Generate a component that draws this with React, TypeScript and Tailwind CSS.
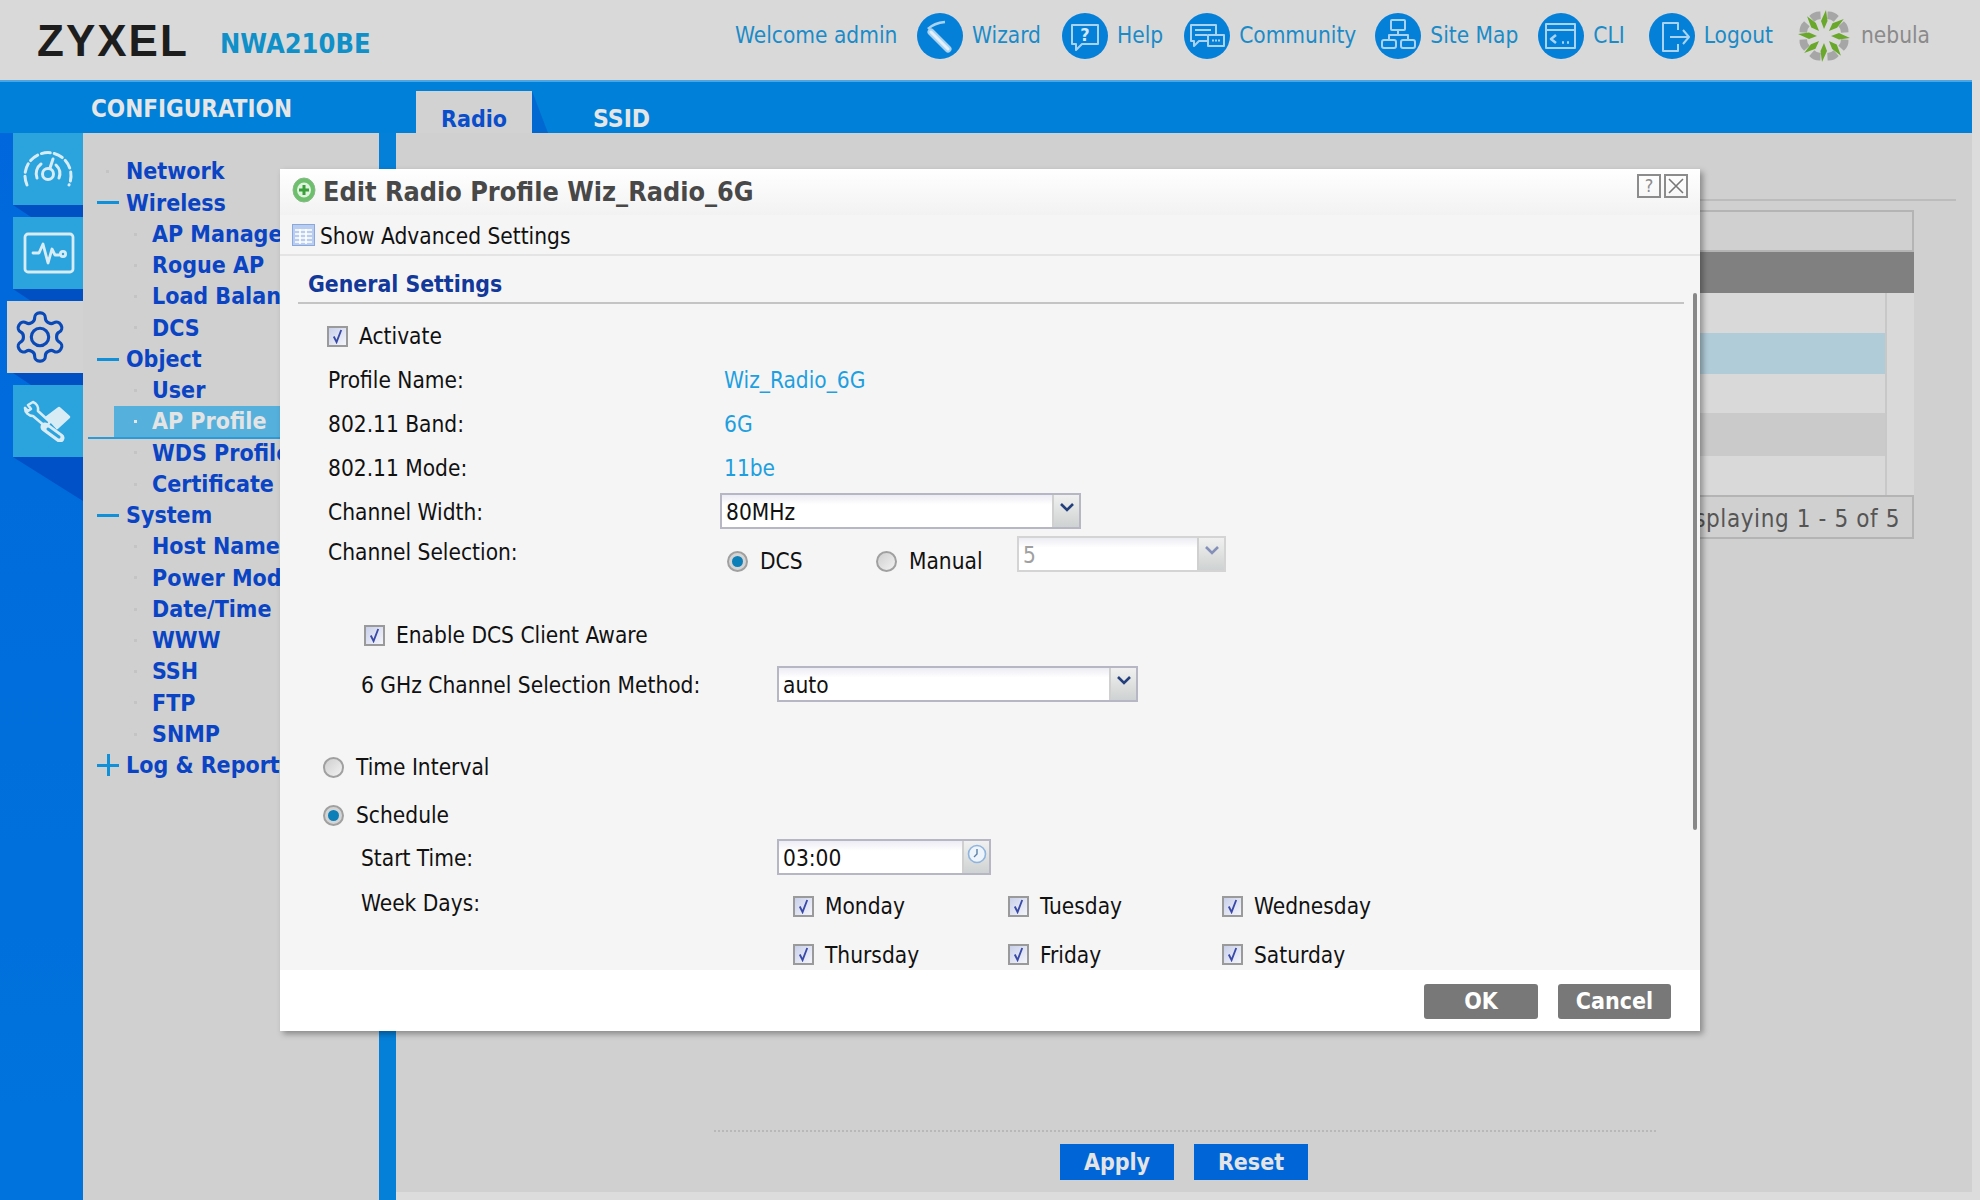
const navRows: { label: string; level: number; mark?: string; active?: boolean }[] = [
  { label: "Network", level: 0 },
  { label: "Wireless", level: 0, mark: "minus" },
  { label: "AP Manage", level: 1 },
  { label: "Rogue AP", level: 1 },
  { label: "Load Balan", level: 1 },
  { label: "DCS", level: 1 },
  { label: "Object", level: 0, mark: "minus" },
  { label: "User", level: 1 },
  { label: "AP Profile", level: 1, active: true },
  { label: "WDS Profile", level: 1 },
  { label: "Certificate", level: 1 },
  { label: "System", level: 0, mark: "minus" },
  { label: "Host Name", level: 1 },
  { label: "Power Mod", level: 1 },
  { label: "Date/Time", level: 1 },
  { label: "WWW", level: 1 },
  { label: "SSH", level: 1 },
  { label: "FTP", level: 1 },
  { label: "SNMP", level: 1 },
  { label: "Log & Report", level: 0, mark: "plus" },
]

function CircleIcon({ children }: { children: React.ReactNode }) {
  return (
    <div className="flex h-[46px] w-[46px] shrink-0 items-center justify-center rounded-full bg-[#0580d8]">
      <svg viewBox="0 0 46 46" className="h-[46px] w-[46px]" fill="none" stroke="#a9d3f0" strokeWidth="2" strokeLinejoin="round">
        {children}
      </svg>
    </div>
  )
}

function TopLink({ label, ml, children }: { label: string; ml: string; children: React.ReactNode }) {
  return (
    <div className={`flex items-center gap-[9px] ${ml}`}>
      <CircleIcon>{children}</CircleIcon>
      <span>{label}</span>
    </div>
  )
}

function NebulaLogo() {
  const angles = [0, 45, 90, 135, 180, 225, 270, 315]
  return (
    <svg viewBox="0 0 54 54" className="h-[54px] w-[54px]">
      {angles.map((a) => (
        <path key={a} d="M21 3 Q27 0 33 3 L30.5 10 Q27 8.5 23.5 10 Z" fill="#a6a6a6" transform={`rotate(${a + 22.5} 27 27)`} />
      ))}
      {angles.map((a) => (
        <path key={a} d="M27 20 L24 12 L29 1 L30.5 12 Z" fill="#6aa82c" transform={`rotate(${a} 27 27)`} />
      ))}
    </svg>
  )
}

function SideTab({ active, children }: { active?: boolean; children: React.ReactNode }) {
  return (
    <div className={`flex h-[72px] items-center ${active ? "ml-[7px] w-[76px] bg-[#d2d2d2]" : "ml-[13px] w-[70px] bg-[#2ba3dc]"}`}>
      {children}
    </div>
  )
}

function Fold() {
  return (
    <svg viewBox="0 0 70 12" preserveAspectRatio="none" className="ml-[13px] block h-[12px] w-[70px]">
      <path d="M0 0H70V12H18Z" fill="#0050c4" />
    </svg>
  )
}

function Check({ label, className = "" }: { label: string; className?: string }) {
  return (
    <div className={`flex items-center gap-[11px] ${className}`}>
      <div className="flex h-[21px] w-[21px] shrink-0 items-center justify-center border-2 border-[#9a9a9a] bg-[linear-gradient(135deg,#c9d0ea,#f4f5fb)]">
        <svg viewBox="0 0 14 16" className="h-[15px] w-[13px]" fill="none" stroke="#3949a8" strokeWidth="2">
          <path d="M3 8 L6 14 L11 1" />
        </svg>
      </div>
      <span>{label}</span>
    </div>
  )
}

function Radio({ on, label, className = "" }: { on?: boolean; label: string; className?: string }) {
  return (
    <div className={`flex items-center gap-[12px] ${className}`}>
      <div className={`flex h-[21px] w-[21px] shrink-0 items-center justify-center rounded-full border-2 border-[#a0a0a0] ${on ? "bg-[#d4d4d4]" : "bg-[linear-gradient(135deg,#cfcfcf,#f2f2f2)]"}`}>
        {on && <div className="h-[11px] w-[11px] rounded-full bg-[#0d7fb8]" />}
      </div>
      <span>{label}</span>
    </div>
  )
}

function Select({ value, width, disabled, className = "" }: { value: string; width: string; disabled?: boolean; className?: string }) {
  return (
    <div className={`flex h-[36px] items-stretch border-2 bg-[linear-gradient(#ececf4,#ffffff_30%)] ${width} ${disabled ? "border-[#d4d4d4] text-[#a0a0a0]" : "border-[#b6b6c4]"} ${className}`}>
      <div className="flex flex-1 items-center pl-[4px] pt-[3px]">{value}</div>
      <div className="flex w-[27px] justify-center border-l-2 border-[#d0d0d0] bg-[linear-gradient(#f0f0f0,#cfd2d2)] pt-[8px]">
        <svg viewBox="0 0 14 9" className="h-[9px] w-[14px]">
          <path d="M1 1 L7 7 L13 1" fill="none" stroke={disabled ? "#8590b8" : "#24407c"} strokeWidth="2.6" />
        </svg>
      </div>
    </div>
  )
}

function Row({ label, value }: { label: string; value: string }) {
  return (
    <div className="flex h-[44px] items-center pl-[48px] pt-[2px]">
      <span className="w-[396px]">{label}</span>
      <span className="text-[#1e9fe0]">{value}</span>
    </div>
  )
}

export default function App() {
  return (
    <div className="relative h-[1200px] w-[1980px] overflow-hidden bg-[#dcdcdc] font-['DejaVu_Sans_Condensed','DejaVu_Sans',sans-serif]">
      {/* header */}
      <header className="flex h-[80px] items-center bg-[#d9d9d9] pl-[37px]">
        <div className="w-[183px] pt-[1px] font-['Liberation_Sans'] text-[44px] font-bold tracking-[2px] text-[#1d1d1d]">ZYXEL</div>
        <div className="mt-[9px] w-[515px] text-[27px] font-bold text-[#1090c8]">NWA210BE</div>
        <div className="flex items-center pb-[8px] text-[22.5px] text-[#1b8bc8]">
          <span className="w-[182px]">Welcome admin</span>
          <TopLink label="Wizard" ml="">
            <path d="M14 19 L31 36" stroke="#a9d3f0" strokeWidth="7" strokeLinecap="round" />
            <path d="M14 19 L31 36" stroke="#e4f1fa" strokeWidth="3" strokeLinecap="round" />
            <path d="M11 16 Q17 10 28 9" strokeWidth="2.6" />
          </TopLink>
          <TopLink label="Help" ml="ml-[21px]">
            <path d="M10 12 H36 V31 H20 L14 37 V31 H10 Z" />
            <text x="23" y="28" textAnchor="middle" fontSize="18" fontWeight="bold" fill="#d6e9f7" stroke="none">?</text>
          </TopLink>
          <TopLink label="Community" ml="ml-[21px]">
            <path d="M7 12 H32 V28 H15 L10 33 V28 H7 Z" />
            <path d="M11 17 H27 M11 22 H23" />
            <path d="M24 22 H40 V33 H24 Z" fill="#0580d8" />
            <path d="M28 27.5 H36" strokeDasharray="2 1" />
          </TopLink>
          <TopLink label="Site Map" ml="ml-[19px]">
            <rect x="16" y="7" width="14" height="10" rx="1" />
            <rect x="7" y="27" width="14" height="8" rx="2" />
            <rect x="26" y="27" width="14" height="8" rx="2" />
            <path d="M23 17 V22 M14 27 V22 H33 V27" />
          </TopLink>
          <TopLink label="CLI" ml="ml-[20px]">
            <rect x="8" y="11" width="29" height="24" />
            <path d="M8 17 H37" />
            <path d="M18 22 L13 26 L18 30" strokeWidth="2.6" fill="none" />
            <path d="M24 29.5 H26 M29 29.5 H31" strokeWidth="2.6" />
          </TopLink>
          <TopLink label="Logout" ml="ml-[24px]">
            <path d="M29 17 V10 H14 V38 H29 V31" />
            <path d="M21 24 H40 M34 17 L40 24 L34 31" />
          </TopLink>
          <div className="ml-[24px]"><NebulaLogo /></div>
          <span className="ml-[10px] text-[#8a8a8a]">nebula</span>
        </div>
      </header>

      {/* blue bar */}
      <div className="mr-[8px] flex h-[53px] border-t-2 border-[#4aa6e4] bg-[#0080d8] text-[23px] font-bold text-[#e6e6e6]">
        <div className="w-[416px] pl-[91px] pt-[9px] text-[24px]">CONFIGURATION</div>
        <div className="mt-[9px] flex w-[116px] justify-center bg-[#d2d2d2] pt-[11px] text-[#0a4ecb]">Radio</div>
        <svg viewBox="0 0 16 42" preserveAspectRatio="none" className="mt-[9px] h-[42px] w-[16px]"><path d="M0 0 L16 42 H0Z" fill="#0068d0" /></svg>
        <div className="ml-[45px] pt-[19px] text-[24.5px]">SSID</div>
      </div>

      {/* body */}
      <div className="flex h-[1067px]">
        <aside className="w-[83px] bg-[linear-gradient(#0068dc,#0074dc)]">
          <SideTab>
            <svg viewBox="0 0 50 40" className="ml-[10px] h-[40px] w-[50px]" fill="none" stroke="#d8ecf6" strokeWidth="3" strokeLinecap="round">
              <path d="M4 36 A23 23 0 1 1 46 36" strokeDasharray="9 4" />
              <circle cx="25" cy="25" r="5.5" />
              <path d="M14 29 A12 12 0 0 1 18 15 M36 29 A12 12 0 0 0 33 16" />
              <path d="M27 19 L30 10" />
            </svg>
          </SideTab>
          <Fold />
          <SideTab>
            <svg viewBox="0 0 52 42" className="ml-[10px] h-[42px] w-[52px]" fill="none" stroke="#d8ecf6" strokeWidth="2.8" strokeLinecap="round" strokeLinejoin="round">
              <rect x="2" y="2" width="48" height="38" rx="3" />
              <path d="M10 21 H16 L20 12 L25 31 L29 17 L32 23 H36" />
              <circle cx="40" cy="22" r="2.6" />
            </svg>
          </SideTab>
          <Fold />
          <SideTab active>
            <svg viewBox="0 0 24 24" className="ml-[4px] h-[58px] w-[58px]" fill="none" stroke="#0a4ab8" strokeWidth="1.3" strokeLinejoin="round">
              <path d="M12.22 2h-.44a2 2 0 0 0-2 2v.18a2 2 0 0 1-1 1.73l-.43.25a2 2 0 0 1-2 0l-.15-.08a2 2 0 0 0-2.73.73l-.22.38a2 2 0 0 0 .73 2.73l.15.1a2 2 0 0 1 1 1.72v.51a2 2 0 0 1-1 1.74l-.15.09a2 2 0 0 0-.73 2.73l.22.38a2 2 0 0 0 2.73.73l.15-.08a2 2 0 0 1 2 0l.43.25a2 2 0 0 1 1 1.73V20a2 2 0 0 0 2 2h.44a2 2 0 0 0 2-2v-.18a2 2 0 0 1 1-1.73l.43-.25a2 2 0 0 1 2 0l.15.08a2 2 0 0 0 2.73-.73l.22-.39a2 2 0 0 0-.73-2.73l-.15-.08a2 2 0 0 1-1-1.74v-.5a2 2 0 0 1 1-1.74l.15-.09a2 2 0 0 0 .73-2.73l-.22-.38a2 2 0 0 0-2.73-.73l-.15.08a2 2 0 0 1-2 0l-.43-.25a2 2 0 0 1-1-1.73V4a2 2 0 0 0-2-2z" />
              <circle cx="12" cy="12" r="3.6" />
            </svg>
          </SideTab>
          <Fold />
          <SideTab>
            <svg viewBox="0 0 48 42" className="ml-[10px] h-[42px] w-[48px]" fill="none" stroke="#d8ecf6" strokeWidth="2.6" strokeLinecap="round" strokeLinejoin="round">
              <path d="M10 2 L5 5 L8 9 L5 11 L2 8 A8 8 0 0 0 10 16 L23 27 L27 22 L15 11 A8 8 0 0 0 10 2 Z" />
              <path d="M24 17 L36 8 L46 17 L34 28 Z" fill="#d8ecf6" />
              <path d="M22 27 L37 38" stroke="#d8ecf6" strokeWidth="9" />
              <path d="M25 29 L36 37" stroke="#2ba3dc" strokeWidth="3" />
            </svg>
          </SideTab>
          <svg viewBox="0 0 70 44" preserveAspectRatio="none" className="ml-[13px] block h-[44px] w-[70px]"><path d="M0 0H70V44Z" fill="#0050c8" /></svg>
        </aside>

        <nav className="w-[296px] bg-[#d0d0d0] pt-[23px] text-[23px] font-bold text-[#0a44c4]">
          {navRows.map((r) => (
            <div key={r.label} className="flex h-[31.25px] items-center whitespace-nowrap">
              <div className={`relative flex h-full w-full items-center ${r.level ? "pl-[69px]" : "pl-[43px]"}`}>
                {r.active && (
                  <>
                    <div className="absolute bottom-0 left-[31px] right-0 top-0 bg-[#55b0dc]" />
                    <div className="absolute bottom-[-2px] left-[5px] right-0 h-[2px] bg-[#2a9ad8]" />
                  </>
                )}
                {r.mark === "minus" && <div className="absolute left-[14px] h-[3px] w-[22px] bg-[#1090d8]" />}
                {r.mark === "plus" && (
                  <>
                    <div className="absolute left-[14px] h-[3px] w-[22px] bg-[#1090d8]" />
                    <div className="absolute left-[24px] h-[22px] w-[3px] bg-[#1090d8]" />
                  </>
                )}
                {!r.mark && <div className={`absolute h-[3px] w-[3px] ${r.level ? "left-[51px]" : "left-[23px]"} ${r.active ? "bg-[#e6e6e6]" : "bg-[#c4c4c4]"}`} />}
                <span className={`relative ${r.active ? "text-[#e4e4e4]" : ""}`}>{r.label}</span>
              </div>
            </div>
          ))}
        </nav>

        <div className="w-[17px] bg-[#0580d8]" />

        {/* page behind the dialog */}
        <main className="mb-[8px] flex h-[1059px] w-[1576px] flex-col bg-[#d0d0d0]">
          <div className="ml-[40px] mr-[16px] mt-[66px] h-[1px] shrink-0 border-t-2 border-[#bcbcbc]" />
          <div className="ml-[40px] mr-[58px] mt-[9px] flex flex-col text-[#555]">
            <div className="h-[42px] border-2 border-[#b4b4b4]" />
            <div className="h-[41px] bg-[#808080]" />
            <div className="flex h-[202px] bg-[#d9d9d9]">
              <div className="flex flex-1 flex-col border-r-2 border-[#c8c8c8]">
                <div className="h-[40px]" />
                <div className="h-[41px] bg-[#b0ccd9]" />
                <div className="h-[39px]" />
                <div className="h-[43px] bg-[#cacaca]" />
              </div>
              <div className="w-[27px]" />
            </div>
            <div className="flex h-[44px] items-center justify-end border-2 border-[#b4b4b4] pr-[12px] pt-[3px] text-[24px] tracking-[0.6px]">Displaying 1 - 5 of 5</div>
          </div>
          <div className="ml-[318px] mr-[316px] mt-auto border-t-2 border-dotted border-[#b8b8b8]" />
          <div className="mb-[12px] ml-[664px] mt-[12px] flex gap-[20px] text-[23px] font-bold text-[#e4e4e4]">
            <div className="flex h-[36px] w-[114px] items-center justify-center bg-[#0066d8]">Apply</div>
            <div className="flex h-[36px] w-[114px] items-center justify-center bg-[#0066d8]">Reset</div>
          </div>
        </main>
      </div>

      {/* dialog */}
      <div className="absolute left-[280px] top-[169px] flex h-[862px] w-[1420px] flex-col bg-[#f5f5f5] text-[22.5px] leading-none text-[#111] shadow-[3px_3px_6px_rgba(0,0,0,0.35)]">
        <div className="relative flex h-[46px] shrink-0 items-center bg-[linear-gradient(#ffffff,#f2f2f2)] pb-[1px] pl-[12px]">
          <svg viewBox="0 0 24 26" className="mt-[-4px] h-[26px] w-[24px]">
            <ellipse cx="12" cy="13" rx="11" ry="12" fill="#6cc06c" stroke="#8ab88a" />
            <ellipse cx="12" cy="13" rx="7" ry="7.5" fill="#dff3df" />
            <path d="M12 8V18M7 13H17" stroke="#3aa03a" strokeWidth="3" />
          </svg>
          <span className="ml-[7px] pt-[1px] text-[26.8px] font-bold text-[#484848]">Edit Radio Profile Wiz_Radio_6G</span>
          <div className="absolute right-[4px] top-[5px] flex gap-[3px] pr-[8px]">
            <div className="flex h-[24px] w-[24px] items-center justify-center border-2 border-[#8c8c8c] text-[18px] text-[#8c8c8c]">?</div>
            <div className="flex h-[24px] w-[24px] items-center justify-center border-2 border-[#8c8c8c]">
              <svg viewBox="0 0 16 16" className="h-[16px] w-[16px]"><path d="M1 1 L15 15 M15 1 L1 15" stroke="#777" strokeWidth="1.6" /></svg>
            </div>
          </div>
        </div>
        <div className="flex h-[41px] shrink-0 items-center border-b-2 border-[#e4e4e4] pl-[12px]">
          <svg viewBox="0 0 23 22" className="h-[22px] w-[23px]">
            <rect x="0.5" y="0.5" width="22" height="21" fill="#b8cdf0" stroke="#8aa8dc" />
            <path d="M3 6H20M3 10H20M3 14H20M3 18H20M8 5V20M14 5V20" stroke="#fff" strokeWidth="1.6" />
          </svg>
          <span className="ml-[5px] pt-[3px]">Show Advanced Settings</span>
        </div>
        <div className="relative min-h-0 flex-1 overflow-hidden">
          <div className="absolute right-[3px] top-[37px] h-[537px] w-[4px] rounded-sm bg-[#888]" />
          <div className="mx-[18px] mr-[16px] flex h-[48px] items-center border-b-2 border-[#c4c4c4] pl-[10px] pt-[10px] text-[22.8px] font-bold text-[#12389a]">General Settings</div>
          <div className="flex h-[53px] items-center pl-[47px] pt-[11px]"><Check label="Activate" /></div>
          <Row label="Profile Name:" value="Wiz_Radio_6G" />
          <Row label="802.11 Band:" value="6G" />
          <Row label="802.11 Mode:" value="11be" />
          <div className="mt-[4px] flex h-[36px] items-center pl-[48px]">
            <span className="w-[392px] pt-[2px]">Channel Width:</span>
            <Select value="80MHz" width="w-[361px]" />
          </div>
          <div className="flex h-[56px] pl-[48px]">
            <span className="mt-[12px] w-[399px]">Channel Selection:</span>
            <Radio on label="DCS" className="mt-[22px] h-[21px] w-[149px]" />
            <Radio label="Manual" className="mt-[22px] h-[21px] w-[141px]" />
            <Select value="5" width="w-[209px]" disabled className="mt-[7px]" />
          </div>
          <div className="mt-[26px] flex h-[42px] items-center pl-[84px] pt-[6px]"><Check label="Enable DCS Client Aware" /></div>
          <div className="mt-[13px] flex h-[35px] items-center pl-[81px]">
            <span className="w-[416px] pt-[3px]">6 GHz Channel Selection Method:</span>
            <Select value="auto" width="w-[361px]" />
          </div>
          <div className="mt-[56px] flex h-[21px] items-center pl-[43px]"><Radio label="Time Interval" /></div>
          <div className="mt-[27px] flex h-[21px] items-center pl-[43px]"><Radio on label="Schedule" /></div>
          <div className="mt-[13px] flex h-[36px] items-center pl-[81px]">
            <span className="w-[416px] pt-[2px]">Start Time:</span>
            <div className="flex h-[36px] w-[214px] border-2 border-[#b6b6c4] bg-[linear-gradient(#ececf4,#ffffff_30%)]">
              <div className="flex flex-1 items-center pl-[4px] pt-[3px]">03:00</div>
              <div className="flex w-[27px] justify-center border-l-2 border-[#d0d0d0] bg-[linear-gradient(#f0f0f0,#cfd2d2)] pt-[3px]">
                <svg viewBox="0 0 20 20" className="h-[20px] w-[20px]" fill="none">
                  <circle cx="10" cy="10" r="8.5" fill="#eef4fb" stroke="#8fb4de" strokeWidth="1.6" />
                  <path d="M10 5V10L7 13" stroke="#5b7fa8" strokeWidth="1.4" />
                </svg>
              </div>
            </div>
          </div>
          <div className="flex pl-[81px] pt-[20px]">
            <span className="mt-[-3px] w-[432px]">Week Days:</span>
            <div className="grid grid-cols-[215px_214px_220px] gap-y-[26px]">
              <Check label="Monday" />
              <Check label="Tuesday" />
              <Check label="Wednesday" />
              <Check label="Thursday" />
              <Check label="Friday" />
              <Check label="Saturday" />
            </div>
          </div>
        </div>
        <div className="flex h-[61px] shrink-0 justify-end gap-[20px] bg-white pr-[29px] pt-[14px] text-[23px] font-bold text-white">
          <div className="flex h-[35px] w-[114px] items-center justify-center rounded-[3px] bg-[#787878]">OK</div>
          <div className="flex h-[35px] w-[113px] items-center justify-center rounded-[3px] bg-[#787878]">Cancel</div>
        </div>
      </div>
    </div>
  )
}
